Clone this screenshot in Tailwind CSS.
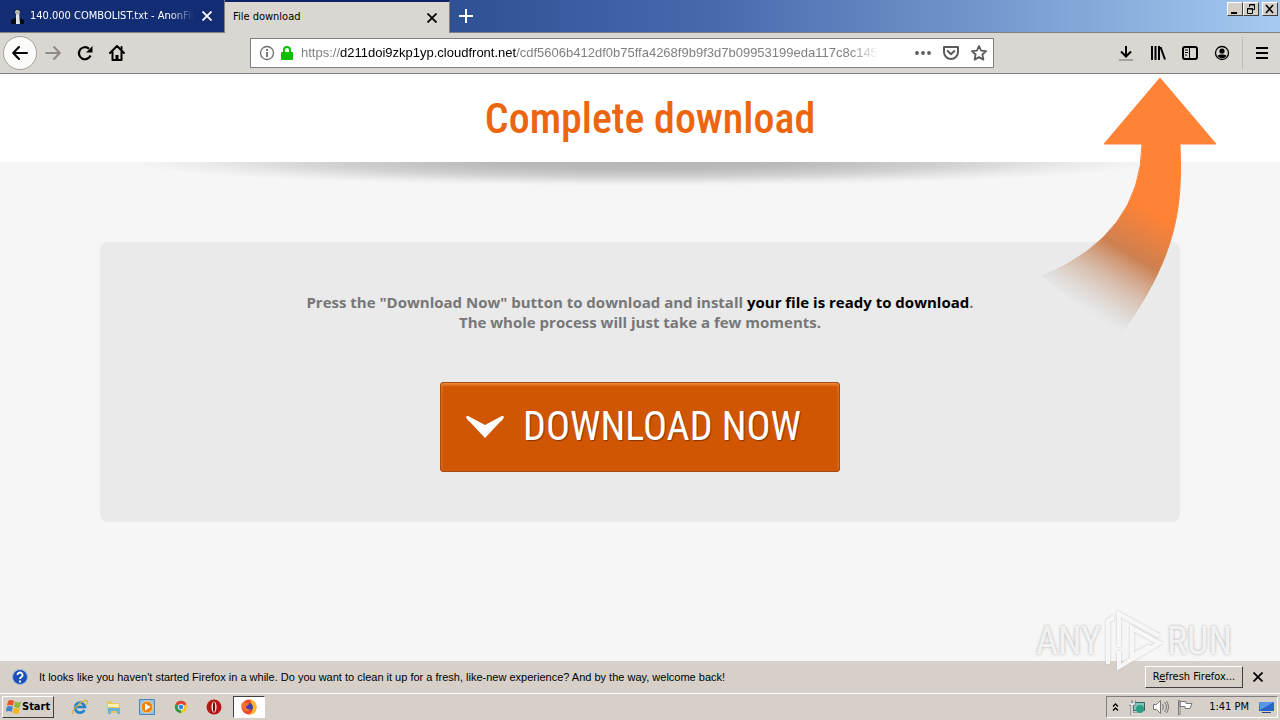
<!DOCTYPE html>
<html lang="en">
<head>
<meta charset="utf-8">
<title>File download</title>
<script src="https://cdn.jsdelivr.net/npm/@tailwindcss/browser@4"></script>
</head>
<body class="h-screen flex flex-col overflow-hidden bg-[#f6f6f6] font-['DejaVu_Sans_Condensed','DejaVu_Sans',sans-serif] text-[11px] text-black">
<header class="shrink-0 border-b border-[#808080] bg-[#dad6d1]">
  <div class="flex h-[33px] bg-linear-to-r from-[#0a246a] via-[#456aac] via-55% to-[#a6caf0]">
    <div class="flex w-[225px] items-center gap-1 border-r border-b border-[#808080] bg-[#122d74] pr-2 pl-2 text-white">
      <svg class="size-[18px] shrink-0" viewBox="0 0 18 18"><path d="M3 17v-4l4-2h5l4 2v4z" fill="#070b18"/><path d="M8 5h3l1 12H8z" fill="#dfe3e6"/><circle cx="9.500" cy="5" r="2.500" fill="#b5b6b0"/><path d="M6 4l3-2 4 2" stroke="#151d31" fill="none"/></svg>
      <span class="flex-1 overflow-hidden whitespace-nowrap mask-r-from-85%">140.000 COMBOLIST.txt - AnonFile</span>
      <button aria-label="Close AnonFiles tab" class="p-1"><svg class="size-[10px]" viewBox="0 0 10 10" stroke="#fff" stroke-width="1.800"><path d="M.5.5l9 9M9.500.5l-9 9"/></svg></button>
    </div>
    <div class="flex w-[225px] items-center justify-between border-t-2 border-r border-[#0a246a] border-r-[#808080] bg-[#dad6d1] pr-2 pl-2">
      <span>File download</span>
      <button aria-label="Close tab" class="p-1"><svg class="size-[10px]" viewBox="0 0 10 10" stroke="#000" stroke-width="1.800"><path d="M.5.5l9 9M9.500.5l-9 9"/></svg></button>
    </div>
    <div class="flex flex-1 items-start justify-between border-b border-[#808080]">
      <button aria-label="New tab" class="px-2 py-2"><svg class="size-4" viewBox="0 0 16 16" stroke="#fff" stroke-width="2"><path d="M8 1v14M1 8h14"/></svg></button>
      <div class="flex pt-[2px] pr-[2px]">
        <button aria-label="Minimize" class="flex h-[14px] w-4 border border-t-white border-l-white border-r-[#404040] border-b-[#404040] bg-[#d4d0c8]"><svg viewBox="0 0 14 12"><path d="M3 9h6v2H3z"/></svg></button>
        <button aria-label="Restore" class="flex h-[14px] w-4 border border-t-white border-l-white border-r-[#404040] border-b-[#404040] bg-[#d4d0c8]"><svg viewBox="0 0 14 12" fill="none" stroke="#000"><path d="M5.500 4V1.500h5v5H8.500M5 2h6M3.500 5.500h5v5h-5zM3 6h6"/></svg></button>
        <button aria-label="Close window" class="ml-[3px] flex h-[14px] w-4 border border-t-white border-l-white border-r-[#404040] border-b-[#404040] bg-[#d4d0c8]"><svg viewBox="0 0 14 12" stroke="#000" stroke-width="1.600"><path d="M3 2l7 8M10 2l-7 8"/></svg></button>
      </div>
    </div>
  </div>
  <div class="flex h-10 items-center pr-1 pl-[3px]">
    <nav class="flex items-center gap-4">
      <button aria-label="Back" class="flex size-[34px] items-center justify-center rounded-full border border-[#a5a29d] bg-[#fbfbfa]"><svg class="size-4" viewBox="0 0 16 16" fill="none" stroke="#000" stroke-width="2" stroke-linecap="round" stroke-linejoin="round"><path d="M15 8H1.500M7 2L1.200 8 7 14"/></svg></button>
      <button aria-label="Forward" class="-ml-2"><svg class="size-4" viewBox="0 0 16 16" fill="none" stroke="#8f8c88" stroke-width="2" stroke-linecap="round" stroke-linejoin="round"><path d="M1 8h13.500M9 2l5.800 6L9 14"/></svg></button>
      <button aria-label="Reload"><svg class="size-4" viewBox="0 0 16 16"><path d="M13.500 10.500A6 6 0 1 1 12 3.800" fill="none" stroke="#000" stroke-width="2.200"/><path d="M15.500 1v6.500H9z"/></svg></button>
      <button aria-label="Home"><svg class="size-4" viewBox="0 0 16 16" fill="none" stroke="#000" stroke-width="2" stroke-linejoin="round" stroke-linecap="round"><path d="M1 8l7-7 7 7M3.500 7v8h9V7"/><path d="M8 14v-4" stroke-width="3" stroke-linecap="butt"/><path d="M12.500 2v2"/></svg></button>
    </nav>
    <div class="mr-[124px] ml-[125px] flex h-[30px] min-w-0 flex-1 items-center gap-1 border border-[#808080] bg-white pr-[6px] pl-2">
      <svg class="size-4 shrink-0" viewBox="0 0 16 16" fill="none" stroke="#6b6b6b"><circle cx="8" cy="8" r="6.500" stroke-width="1.300"/><path d="M8 7v5M8 4v2" stroke-width="1.800"/></svg>
      <svg class="mr-1 ml-[2px] h-[15px] w-3 shrink-0" viewBox="0 0 12 15"><path d="M3 7V4a3 3 0 0 1 6 0v3" fill="none" stroke="#12bc00" stroke-width="2"/><rect y="6" width="12" height="8" rx="1" fill="#12bc00"/></svg>
      <div aria-label="Address" class="min-w-0 flex-1 overflow-hidden whitespace-nowrap mask-r-from-95% font-['Liberation_Sans',sans-serif] text-[13px] text-[#808080]">https://<span class="text-black">d211doi9zkp1yp.cloudfront.net</span>/cdf5606b412df0b75ffa4268f9b9f3d7b09953199eda117c8c1459</div>
      <div class="ml-8 flex items-center gap-3">
        <button aria-label="Page actions"><svg class="size-4" viewBox="0 0 16 16" fill="#5d5b5a"><circle cx="2" cy="8" r="1.900"/><circle cx="8" cy="8" r="1.900"/><circle cx="14" cy="8" r="1.900"/></svg></button>
        <button aria-label="Save to Pocket"><svg class="size-4" viewBox="0 0 16 16" fill="none" stroke="#5d5b5a" stroke-width="2" stroke-linejoin="round" stroke-linecap="round"><path d="M1 2h14v5a7 7 0 0 1-14 0zM4.700 6L8 9.200 11.300 6"/></svg></button>
        <button aria-label="Bookmark"><svg class="size-4" viewBox="0 0 16 16" fill="none" stroke="#5d5b5a" stroke-width="1.800" stroke-linejoin="round"><path d="M8 1l2.100 4.600 5 .5-3.700 3.400 1 5.100L8 12.100l-4.400 2.500 1-5.100L.9 6.100l5-.5z"/></svg></button>
      </div>
    </div>
    <div class="ml-auto flex items-center gap-4 pr-[6px]">
      <button aria-label="Downloads"><svg class="size-4" viewBox="0 0 16 16" fill="none" stroke="#000" stroke-width="2"><path d="M8 1v10M3 6.500l5 5 5-5"/><path d="M1 15h14" stroke="#a5a29e"/></svg></button>
      <button aria-label="Library"><svg class="size-4" viewBox="0 0 16 16" stroke="#000" stroke-width="2"><path d="M2 1v14M5.500 1v14M9 1v14M10.500 2l4.500 12.500"/></svg></button>
      <button aria-label="Sidebars"><svg class="size-4" viewBox="0 0 16 16" fill="none" stroke="#000"><rect x="1" y="2" width="14" height="12" rx="2" stroke-width="2"/><path d="M7.500 2v12M3 5h3M3 7.500h3M3 10h2"/></svg></button>
      <button aria-label="Account"><svg class="size-4" viewBox="0 0 16 16"><circle cx="8" cy="8" r="6.500" fill="none" stroke="#000" stroke-width="1.300"/><circle cx="8" cy="6" r="2.600"/><path d="M3.500 10.500c2-1.500 7-1.500 9 0C11 14 5 14 3.500 10.500z"/></svg></button>
      <button aria-label="Menu" class="-ml-1 border-l border-[#bdbab5] py-2 pl-[11px]"><svg class="size-4" viewBox="0 0 16 16" stroke="#000" stroke-width="2"><path d="M2 3h12M2 8h12M2 13h12"/></svg></button>
    </div>
  </div>
</header>
<main class="relative min-h-0 flex-1">
  <div class="flex h-[88px] items-center justify-center bg-white pl-5">
    <h1 class="font-['Roboto_Condensed','Liberation_Sans_Narrow',sans-serif] text-[42px] font-medium text-[#ec650f]">Complete download</h1>
  </div>
  <div class="mx-auto h-6 w-[80%] bg-[radial-gradient(ellipse_50%_100%_at_50%_0%,#b4b4b4_0%,#bababa_30%,#d0d0d0_60%,#ebebeb_85%,#f6f6f6_100%)]"></div>
  <section class="mx-[100px] mt-14 flex flex-col items-center rounded-lg bg-[#eaeaea] py-[50px]">
    <p class="text-center font-['Open_Sans',sans-serif] text-[15px] leading-5 font-bold text-[#777]">Press the "Download Now" button to download and install <span class="text-black">your file is ready to download</span>.<br>The whole process will just take a few moments.</p>
    <button class="mt-[50px] flex h-[90px] items-center gap-[18px] rounded-[3px] border border-[#a34b12] bg-[#d15603] pr-[38px] pl-6 font-['Roboto_Condensed','Liberation_Sans_Narrow',sans-serif] text-[40px] text-white shadow-[inset_0_2px_3px_#ee8a3c] text-shadow-[1px_1px_1px_#843400]">
      <svg class="h-[23px] w-10" viewBox="0 0 40 23" fill="#fff"><path d="M1 1q1-2 4 0l15 8 15-8q3-2 4 0-1 3-4 5L20 22 5 6Q2 4 1 1z"/></svg>
      DOWNLOAD NOW
    </button>
  </section>
  <svg class="absolute top-0 right-[60px] h-[270px] w-[180px]" viewBox="1040 74 180 270">
    <defs><linearGradient id="tail" gradientUnits="userSpaceOnUse" x1="1080" y1="308" x2="1142" y2="206"><stop offset="0" stop-color="#bbb" stop-opacity="0"/><stop offset=".2" stop-color="#c8a690" stop-opacity=".35"/><stop offset=".6" stop-color="#cc7a48" stop-opacity=".95"/><stop offset="1" stop-color="#ff8235"/></linearGradient></defs>
    <path d="M1160 78l56 66h-36c2 60 0 110-62 194l-75-62q98-42 99-132h-38z" fill="url(#tail)" stroke="url(#tail)" stroke-linejoin="round"/>
  </svg>
</main>
<footer class="relative shrink-0 bg-[#d6d0c9]">
  <div class="flex h-8 items-center pr-[13px] pl-3">
    <svg class="size-4" viewBox="0 0 16 16"><circle cx="8" cy="8" r="7.500" fill="#1d50b8" stroke="#9db7e4"/><path d="M5.500 6a2.500 2.500 0 1 1 3.500 2.300Q8 8.800 8 10M8 11.500v2" fill="none" stroke="#fff" stroke-width="1.800"/></svg>
    <span class="ml-[11px] font-['Liberation_Sans',sans-serif]">It looks like you haven't started Firefox in a while. Do you want to clean it up for a fresh, like-new experience? And by the way, welcome back!</span>
    <button class="ml-auto h-[22px] w-[98px] border border-t-white border-l-white border-r-[#404040] border-b-[#404040] whitespace-nowrap">R<u>e</u>fresh Firefox...</button>
    <button aria-label="Dismiss" class="ml-[6px] p-1"><svg class="size-[10px]" viewBox="0 0 10 10" stroke="#000" stroke-width="1.800"><path d="M.5.5l9 9M9.500.5l-9 9"/></svg></button>
  </div>
  <div class="flex h-[27px] items-center border-t border-white pr-[2px] pl-[2px]">
    <button class="flex h-[22px] items-center border border-t-white border-l-white border-r-[#404040] border-b-[#404040] px-[3px] font-bold">
      <svg class="h-4 w-4" viewBox="0 0 16 16"><path d="M2 2q3-2 6 0L7 7Q4 5 1 7z" fill="#e8572b"/><path d="M9 2.500q3 2 6 0L14 8q-3 2-6-.5z" fill="#8bb83a"/><path d="M.8 8q3-2 6 0l-1 5q-3-2-6 0z" fill="#3d84c6"/><path d="M7.800 8.500q3 2 6 .5l-1 5q-3 2-6-.5z" fill="#f2b51d"/></svg>Start</button>
    <nav class="ml-[9px] flex items-center">
      <button aria-label="Internet Explorer" class="flex w-[34px] justify-center"><svg class="size-4" viewBox="0 0 16 16"><path d="M12.500 11a5 5 0 1 1 .5-3H4" fill="none" stroke="#2382cb" stroke-width="2.600"/><path d="M1.500 15Q-1 12 6 6t9-4q1 1-1 4" fill="none" stroke="#d8b33a" stroke-width="1.300"/></svg></button>
      <button aria-label="Explorer" class="flex w-[33px] justify-center"><svg class="size-4" viewBox="0 0 16 16"><path d="M1 2h5l1 2h7v10H1z" fill="#e8c762"/><path d="M2 5h11v3H2z" fill="#fff0b4"/><path d="M2 15V9h12v6h-3v-3H5v3z" fill="#6fb3d9"/></svg></button>
      <button aria-label="Media Player" class="flex w-[34px] justify-center"><svg class="size-4" viewBox="0 0 16 16"><path d="M.5.5h15v15H.5z" fill="#8fc0e6" stroke="#4d86b8"/><circle cx="8" cy="8" r="6" fill="#ee8511" stroke="#fbd6a2"/><path d="M6 4.500L11.500 8 6 11.500z" fill="#fff"/></svg></button>
      <button aria-label="Chrome" class="flex w-[33px] justify-center"><svg class="size-[14px]" viewBox="0 0 16 16"><circle cx="8" cy="8" r="7" fill="#f5c52b"/><path d="M8 8L1.900 4.500A7 7 0 0 1 14.100 4.500z" fill="#dc4436"/><path d="M8 8L1.900 4.500A7 7 0 0 0 8 15z" fill="#2b9b50"/><path d="M2 4.500A7 7 0 0 1 14 4.500V5H3z" fill="#dc4436"/><circle cx="8" cy="8" r="3.200" fill="#3d7fe0" stroke="#fff"/></svg></button>
      <button aria-label="Opera" class="flex w-[34px] justify-center"><svg class="size-4" viewBox="0 0 16 16"><circle cx="8" cy="8" r="7.500" fill="#b81515"/><ellipse cx="8" cy="8" rx="2.500" ry="5.500" fill="#fff"/><ellipse cx="8" cy="8" rx="1.200" ry="5" fill="#7c0a0a"/></svg></button>
      <button aria-label="Firefox" class="ml-[2px] flex h-[22px] w-8 items-center justify-center border border-t-[#404040] border-l-[#404040] border-r-white border-b-white bg-white"><svg class="size-4" viewBox="0 0 16 16"><circle cx="8" cy="8" r="7.500" fill="#f0492c"/><path d="M8 0q8 2 7.500 9T8 15.500Q13 12 11 6T8 0z" fill="#fdb92b"/><circle cx="8" cy="8" r="3.800" fill="#3d3fae"/><path d="M1 4q2-2 4 0h3q0 3-3 3 0 4 5 3-3 4-7 1T1 4z" fill="#f5702a"/></svg></button>
    </nav>
    <div class="ml-auto flex h-[22px] items-center border border-t-[#808080] border-l-[#808080] border-r-white border-b-white pr-[2px] pl-[3px]">
      <button aria-label="Show hidden icons" class="px-[2px]"><svg class="h-2 w-[7px]" viewBox="0 0 7 8" fill="none" stroke="#000" stroke-width="1.300"><path d="M1 3.500l2.500-2.500L6 3.500M1 7.500L3.500 5 6 7.500"/></svg></button>
      <div class="ml-2 flex gap-2">
        <svg class="size-4" viewBox="0 0 16 16"><path d="M4.500 3.500h11v8h-11z" fill="#84c5bb" stroke="#31665f"/><path d="M1 1v4h4V1M3 5v10h8" fill="none" stroke="#777" stroke-width="3"/><path d="M1 1v4h4V1M3 5v10h8" fill="none" stroke="#f9f9f9" stroke-width="1.400"/><circle cx="11" cy="10" r="4" fill="#2b9f86"/></svg>
        <svg class="size-4" viewBox="0 0 16 16" fill="none" stroke="#777"><path d="M.5 5.500h3L7.500 1.500v13l-4-4h-3z" fill="#fff"/><path d="M9.500 5q2 3 0 6M11.500 3q4 5 0 10M13.500 2q4 6 0 12"/></svg>
        <svg class="size-4" viewBox="0 0 16 16" fill="#fff" stroke="#777"><path d="M1.500 15.500v-14h1.500v14zM3 2.500h6v2h6l-2 5H8v-2H3z"/></svg>
      </div>
      <span class="ml-4">1:41 PM</span>
      <svg class="ml-[10px] h-[13px] w-4" viewBox="0 0 16 13"><path d="M0 1h15v9H0z" fill="#2863cb"/><path d="M0 1h15L1 9z" fill="#5a97ec"/><path d="M3 11h9v1H3z" fill="#234783"/></svg>
    </div>
  </div>
</footer>
<div aria-label="ANY.RUN" class="absolute right-12 bottom-12 flex items-center font-['Roboto_Condensed','Liberation_Sans_Narrow',sans-serif] text-[38px] leading-[62px] text-white/80 text-shadow-[0_0_3px_#aaa]">
  <span>ANY</span><svg class="mx-1 h-[62px] w-[58px] drop-shadow-[0_0_1px_#bbb]" viewBox="0 0 58 62" fill="none" stroke="#fff" stroke-opacity=".85" stroke-width="4"><path d="M3 54V11l6-4M14 37V4l40 22M14 41v16l40-24-27-15v28l18-10"/></svg><span>RUN</span>
</div>
</body>
</html>
